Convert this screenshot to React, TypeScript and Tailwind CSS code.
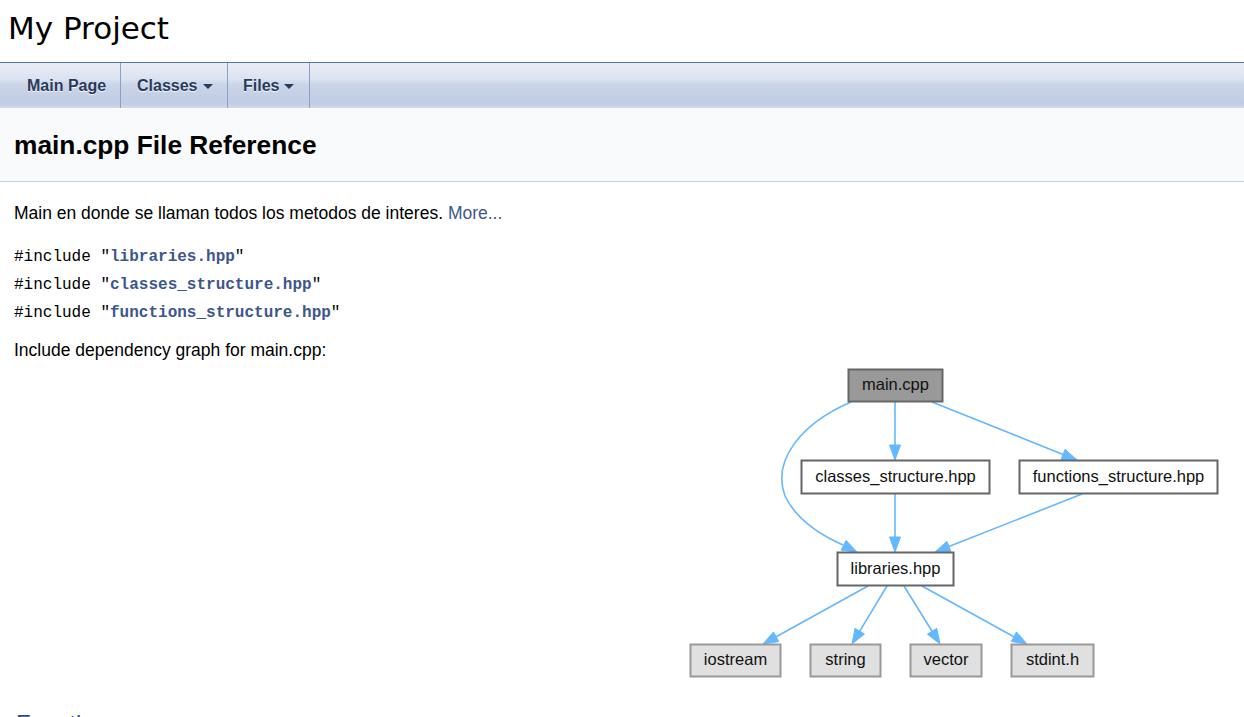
import React from "react";

const EDGE = "#63B8FF";

function Arrow({ x1, y1, x2, y2 }: { x1: number; y1: number; x2: number; y2: number }) {
  const dx = x2 - x1;
  const dy = y2 - y1;
  const len = Math.sqrt(dx * dx + dy * dy);
  const ux = dx / len;
  const uy = dy / len;
  const L = 15;
  const W = 5.5;
  const bx = x2 - ux * L;
  const by = y2 - uy * L;
  const px = -uy * W;
  const py = ux * W;
  return (
    <g>
      <line x1={x1} y1={y1} x2={bx} y2={by} stroke={EDGE} strokeWidth={1.6} />
      <polygon points={`${x2},${y2} ${bx + px},${by + py} ${bx - px},${by - py}`} fill={EDGE} stroke={EDGE} strokeWidth={1} />
    </g>
  );
}

function Head({ x2, y2, dx, dy }: { x2: number; y2: number; dx: number; dy: number }) {
  const len = Math.sqrt(dx * dx + dy * dy);
  const ux = dx / len;
  const uy = dy / len;
  const L = 15;
  const W = 5.5;
  const bx = x2 - ux * L;
  const by = y2 - uy * L;
  const px = -uy * W;
  const py = ux * W;
  return <polygon points={`${x2},${y2} ${bx + px},${by + py} ${bx - px},${by - py}`} fill={EDGE} stroke={EDGE} strokeWidth={1} />;
}

function Node({ x, y, w, h, label, fill, stroke }: { x: number; y: number; w: number; h: number; label: string; fill: string; stroke: string }) {
  return (
    <g>
      <rect x={x + 0.5} y={y + 0.5} width={w} height={h} fill={fill} stroke={stroke} strokeWidth={2} />
      <text
        x={x + w / 2 + 0.5}
        y={y + h / 2 + 5}
        textAnchor="middle"
        fontSize={16.5}
        fontFamily="'Liberation Sans', Arial, sans-serif"
        fill="#111"
      >
        {label}
      </text>
    </g>
  );
}

function Caret() {
  return (
    <svg width="10" height="5" viewBox="0 0 10 5" className="ml-[5px] mt-[1px]">
      <polygon points="0,0 10,0 5,5" fill="#283A5D" />
    </svg>
  );
}

export default function App() {
  const navText = "text-[16px] font-bold text-[#283A5D] [text-shadow:0_1px_1px_rgba(255,255,255,0.9)]";
  return (
    <div className="min-h-[717px] bg-white text-black" style={{ fontFamily: "'Liberation Sans', Arial, sans-serif" }}>
      {/* Project title */}
      <div className="h-[62px] pl-[8px] pt-[8px]">
        <div className="text-[31px] leading-[40px] text-black" style={{ fontFamily: "'DejaVu Sans', Tahoma, sans-serif" }}>
          My Project
        </div>
      </div>

      {/* Nav bar */}
      <div className="flex h-[46px] border-t border-[#5373B4] bg-[linear-gradient(to_bottom,#e9edf7_0%,#dbe2f0_35%,#c9d4e8_50%,#c0cce3_90%,#d3dbeb_100%)]">
        <div className={`flex w-[121px] items-center border-r border-[#8aa0cc] pl-[27px] ${navText}`}>Main Page</div>
        <div className={`flex w-[107px] items-center border-r border-[#8aa0cc] pl-[16px] ${navText}`}>
          Classes
          <Caret />
        </div>
        <div className={`flex w-[82px] items-center border-r border-[#8aa0cc] pl-[15px] ${navText}`}>
          Files
          <Caret />
        </div>
      </div>

      {/* Header */}
      <div className="flex h-[74px] items-center border-b border-[#C4CFE5] bg-[#F9FAFC] pl-[14px]">
        <div className="text-[26.3px] font-bold leading-[30px] text-black">main.cpp File Reference</div>
      </div>

      {/* Contents */}
      <div className="px-[14px]">
        <p className="mt-[19px] text-[17.5px] leading-[24px]">
          Main en donde se llaman todos los metodos de interes. <span className="text-[#3D578C]">More...</span>
        </p>
        <div className="mt-[18px] text-[16px] leading-[28px]" style={{ fontFamily: "'Liberation Mono', 'DejaVu Sans Mono', monospace" }}>
          <div>
            #include "<span className="font-bold text-[#3D578C]">libraries.hpp</span>"
          </div>
          <div>
            #include "<span className="font-bold text-[#3D578C]">classes_structure.hpp</span>"
          </div>
          <div>
            #include "<span className="font-bold text-[#3D578C]">functions_structure.hpp</span>"
          </div>
        </div>
        <p className="mt-[11px] text-[17.5px] leading-[24px]">Include dependency graph for main.cpp:</p>
      </div>

      {/* Graph */}
      <div className="mt-[2px] ml-[680px]">
        <svg width="560" height="340" viewBox="680 365 560 340">
          {/* edges from main.cpp */}
          <Arrow x1={895} y1={403} x2={895} y2={461} />
          <Arrow x1={932} y1={403} x2={1077} y2={461} />
          <path d="M 851 403 C 800 425, 772 462, 785 497 C 797 522, 825 538, 843 546" fill="none" stroke={EDGE} strokeWidth={1.6} />
          <Head x2={857} y2={553} dx={14} dy={7} />
          {/* to libraries */}
          <Arrow x1={895} y1={495} x2={895} y2={553} />
          <Arrow x1={1082} y1={495} x2={935} y2={553} />
          {/* from libraries */}
          <Arrow x1={868} y1={587} x2={763} y2={645} />
          <Arrow x1={887} y1={587} x2={852} y2={645} />
          <Arrow x1={904} y1={587} x2={940} y2={645} />
          <Arrow x1={922} y1={587} x2={1027} y2={645} />

          <Node x={848} y={370} w={94} h={32} label="main.cpp" fill="#999999" stroke="#666666" />
          <Node x={801} y={461} w={188} h={33} label="classes_structure.hpp" fill="#ffffff" stroke="#666666" />
          <Node x={1019} y={461} w={198} h={33} label="functions_structure.hpp" fill="#ffffff" stroke="#666666" />
          <Node x={837} y={553} w={116} h={33} label="libraries.hpp" fill="#ffffff" stroke="#666666" />
          <Node x={690} y={645} w={90} h={32} label="iostream" fill="#E0E0E0" stroke="#999999" />
          <Node x={810} y={645} w={70} h={32} label="string" fill="#E0E0E0" stroke="#999999" />
          <Node x={910} y={645} w={71} h={32} label="vector" fill="#E0E0E0" stroke="#999999" />
          <Node x={1011} y={645} w={82} h={32} label="stdint.h" fill="#E0E0E0" stroke="#999999" />
        </svg>
      </div>

      <div className="px-[14px] pt-[5px]">
        <h2 className="border-b border-[#879ECB] pl-[2px] text-[24px] font-normal leading-[30px] text-[#354C7B]">Functions</h2>
      </div>
    </div>
  );
}
